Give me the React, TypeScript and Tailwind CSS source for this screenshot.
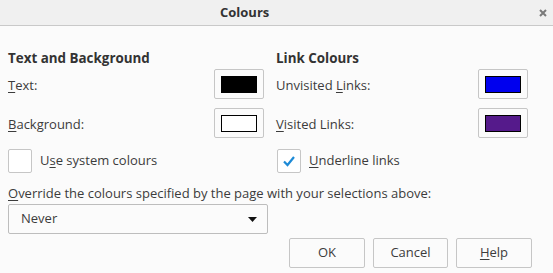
import { ReactNode } from "react";

const font = "font-['Open_Sans','Noto_Sans',sans-serif]";

function Key({ children }: { children: ReactNode }) {
  return <span className="underline underline-offset-2">{children}</span>;
}

function Swatch({ hex }: { hex: string }) {
  return (
    <button
      type="button"
      className="flex h-[30px] w-[50px] items-center justify-center rounded-[2px] border border-[#c6c6c6] bg-[#fbfbfb]"
    >
      <span className="h-[17px] w-[36px] border border-black" style={{ backgroundColor: hex }} />
    </button>
  );
}

function Check({ checked }: { checked?: boolean }) {
  return (
    <span className="flex h-[24px] w-[24px] items-center justify-center rounded-[2px] border border-[#c6c6c6] bg-white">
      {checked ? (
        <svg width="14" height="12" viewBox="0 0 14 12">
          <path d="M2 6.5 L5.5 10 L12 2" fill="none" stroke="#1d8ad6" strokeWidth="2.2" />
        </svg>
      ) : null}
    </span>
  );
}

function ColourRow({ label, hex }: { label: ReactNode; hex: string }) {
  return (
    <div className="flex h-[30px] items-center justify-between">
      <span className="pt-[3px]">{label}</span>
      <Swatch hex={hex} />
    </div>
  );
}

export default function App() {
  return (
    <div className={`h-[273px] w-[553px] bg-[#fbfbfb] text-[13px] text-[#3c3c3c] ${font}`}>
      <div className="flex h-[26px] items-center border-b border-[#c9c9c9] bg-[#f0f0f0]">
        <span className="pl-[220px] text-[13px] font-bold text-[#333]">Colours</span>
        <span className="flex-1" />
        <svg className="mr-[6px]" width="8" height="8" viewBox="0 0 8 8">
          <path d="M1 1 L7 7 M7 1 L1 7" stroke="#7a7a7a" strokeWidth="2" />
        </svg>
      </div>

      <div className="px-[8px]">
        <div className="mt-[24px] grid grid-cols-[256px_252px] gap-x-[12px]">
          <div>
            <div className="h-[17px] text-[13.4px] font-bold leading-[17px] text-[#333]">Text and Background</div>
            <div className="mt-[2px]">
              <ColourRow label={<><Key>T</Key>ext:</>} hex="#000000" />
            </div>
            <div className="mt-[9px]">
              <ColourRow label={<><Key>B</Key>ackground:</>} hex="#ffffff" />
            </div>
            <label className="mt-[11px] flex h-[24px] items-center gap-[8px]">
              <Check />
              <span>U<Key>s</Key>e system colours</span>
            </label>
          </div>
          <div>
            <div className="h-[17px] text-[13.4px] font-bold leading-[17px] text-[#333]">Link Colours</div>
            <div className="mt-[2px]">
              <ColourRow label={<>Unvisited <Key>L</Key>inks:</>} hex="#0000ee" />
            </div>
            <div className="mt-[9px]">
              <ColourRow label={<><Key>V</Key>isited Links:</>} hex="#551a8b" />
            </div>
            <label className="mt-[11px] flex h-[24px] items-center gap-[8px] pl-[1px]">
              <Check checked />
              <span><Key>U</Key>nderline links</span>
            </label>
          </div>
        </div>

        <div className="mt-[12px] h-[17px] leading-[17px]">
          <Key>O</Key>verride the colours specified by the page with your selections above:
        </div>
        <div className="mt-[2px] flex h-[30px] w-[260px] items-center justify-between rounded-[2px] border border-[#bdbdbd] bg-[#fbfbfb] pl-[12px] pr-[10px]">
          <span>Never</span>
          <svg width="9" height="5" viewBox="0 0 9 5">
            <path d="M0 0 H9 L4.5 5 Z" fill="#111" />
          </svg>
        </div>

        <div className="mt-[4px] flex justify-end gap-[8px] pr-[13px]">
          <button type="button" className="h-[30px] w-[76px] rounded-[2px] border border-[#c6c6c6] bg-[#fbfbfb]">OK</button>
          <button type="button" className="h-[30px] w-[75px] rounded-[2px] border border-[#c6c6c6] bg-[#fbfbfb]">Cancel</button>
          <button type="button" className="h-[30px] w-[76px] rounded-[2px] border border-[#c6c6c6] bg-[#fbfbfb]"><Key>H</Key>elp</button>
        </div>
      </div>
    </div>
  );
}
